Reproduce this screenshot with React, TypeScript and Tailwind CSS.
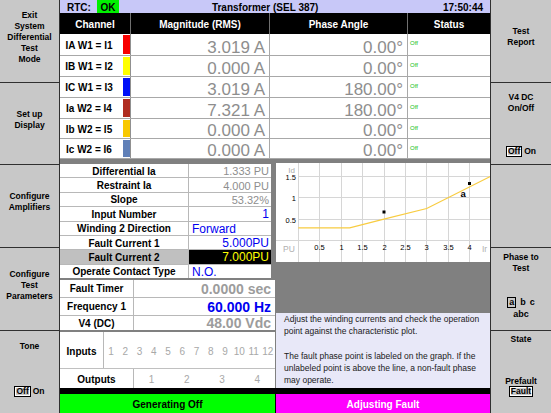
import React from "react";

const channels = [
  { ch: "IA W1 = I1", strip: "bg-[#f80000]", mag: "3.019 A", ang: "0.00", h: "h-[22px]" },
  { ch: "IB W1 = I2", strip: "bg-[#ffff00]", mag: "0.000 A", ang: "0.00", h: "h-[21px]" },
  { ch: "IC W1 = I3", strip: "bg-[#0010f8]", mag: "3.019 A", ang: "180.00", h: "h-[21px]" },
  { ch: "Ia W2 = I4", strip: "bg-[#b02c20]", mag: "7.321 A", ang: "180.00", h: "h-[21px]" },
  { ch: "Ib W2 = I5", strip: "bg-[#f8c800]", mag: "0.000 A", ang: "0.00", h: "h-[20px]" },
  { ch: "Ic W2 = I6", strip: "bg-[#6080b8]", mag: "0.000 A", ang: "0.00", h: "h-[20px]" },
];

const params = [
  { l: "Differential Ia", v: "1.333 PU", vc: "justify-end pr-[2px] text-[11px] text-[#8e8e8e]" },
  { l: "Restraint Ia", v: "4.000 PU", vc: "justify-end pr-[2px] text-[11px] text-[#8e8e8e]" },
  { l: "Slope", v: "53.32%", vc: "justify-end pr-[2px] text-[11px] text-[#8e8e8e]" },
  { l: "Input Number", v: "1", vc: "justify-end pr-[2px] text-[12px] text-[#0000f0]" },
  { l: "Winding 2 Direction", v: "Forward", vc: "justify-start pl-[3px] text-[12px] text-[#0000f0]" },
  { l: "Fault Current 1", v: "5.000PU", vc: "justify-end pr-[2px] text-[12px] text-[#0000f0]" },
  { l: "Fault Current 2", v: "7.000PU", vc: "justify-end pr-[2px] text-[12px] text-[#ffff00] bg-black", sel: true },
  { l: "Operate Contact Type", v: "N.O.", vc: "justify-start pl-[3px] text-[12px] text-[#0000f0]" },
];

// boxed "Off" + plain "On"
const Toggle = () => (
  <div className="flex items-center justify-center gap-[2px] text-[8.5px] font-bold leading-[9px]">
    <span className="border border-black px-px shadow-[inset_0_0_0_1px_#ffffff]">Off</span>
    <span>On</span>
  </div>
);

const LeftBar = () => (
  <div className="w-[60px] shrink-0 flex flex-col border-r border-[#303030] bg-[#c8c8c8] text-[8.5px] font-bold leading-[11px] text-center">
    <div className="h-[83px] border-b border-[#303030] flex items-center justify-center pb-[8px]">
      Exit<br />System<br />Differential<br />Test<br />Mode
    </div>
    <div className="h-[82px] border-b border-[#303030] flex items-center justify-center pb-[8px]">
      Set up<br />Display
    </div>
    <div className="h-[83px] border-b border-[#303030] flex items-center justify-center pb-[8px]">
      Configure<br />Amplifiers
    </div>
    <div className="h-[83px] border-b border-[#303030] flex items-center justify-center pb-[8px]">
      Configure<br />Test<br />Parameters
    </div>
    <div className="h-[82px] flex flex-col items-center pt-[10px] pb-[16px]">
      <div>Tone</div>
      <div className="mt-auto"><Toggle /></div>
    </div>
  </div>
);

const RightBar = () => (
  <div className="w-[61px] shrink-0 flex flex-col border-l border-[#303030] bg-[#c8c8c8] text-[8.5px] font-bold leading-[11px] text-center">
    <div className="h-[83px] border-b border-[#303030] flex items-center justify-center pb-[8px]">
      Test<br />Report
    </div>
    <div className="h-[82px] border-b border-[#303030] flex flex-col items-center pt-[9px] pb-[7px]">
      <div>V4 DC<br />On/Off</div>
      <div className="mt-auto"><Toggle /></div>
    </div>
    <div className="h-[83px] border-b border-[#303030]" />
    <div className="h-[83px] border-b border-[#303030] flex flex-col items-center pt-[4px] pb-[10px]">
      <div>Phase to<br />Test</div>
      <div className="mt-auto flex flex-col items-center text-[9px]">
        <div className="flex items-center gap-[4px] leading-[9px]">
          <span className="border border-black px-px">a</span>
          <span>b</span>
          <span>c</span>
        </div>
        <div className="leading-[12px]">abc</div>
      </div>
    </div>
    <div className="h-[82px] flex flex-col items-center pt-[3px] pb-[16px]">
      <div>State</div>
      <div className="mt-auto flex flex-col items-center">
        <div className="leading-[10px]">Prefault</div>
        <span className="border border-black px-px leading-[9px] shadow-[inset_0_0_0_1px_#ffffff]">Fault</span>
      </div>
    </div>
  </div>
);

const vx = [22.5, 43.5, 65.5, 86.5, 108.5, 129.5, 150.5, 172.5, 193.5];
const xl = ["0.5", "1", "1.5", "2", "2.5", "3", "3.5", "4"];

const Chart = () => (
  <svg width="214" height="99" className="block">
    <rect width="214" height="99" fill="#ffffff" />
    {vx.map((x) => (
      <line key={x} x1={x} y1={0} x2={x} y2={99} stroke="#d6d6d6" />
    ))}
    {[13.5, 34.5, 56.5].map((y) => (
      <line key={y} x1={22} y1={y} x2={214} y2={y} stroke="#d6d6d6" />
    ))}
    <line x1={0} y1={77.5} x2={214} y2={77.5} stroke="#d6d6d6" />
    <polyline
      points="22.3,64.8 73.7,64.8 107.9,56.2 150.7,45.5 214.9,13.2"
      fill="none"
      stroke="#f8cc40"
      strokeWidth="1.2"
    />
    <rect x="106.5" y="47.5" width="3" height="3" fill="#000" />
    <rect x="192" y="19" width="3" height="3" fill="#000" />
    <text x="184.5" y="34" fontSize="9.5" fontWeight="bold" fill="#000">a</text>
    <text x="19" y="9.5" fontSize="8" textAnchor="end" fill="#a8a8a8">Id</text>
    <text x="20" y="17" fontSize="7.5" textAnchor="end" fill="#000">1.5</text>
    <text x="20" y="38" fontSize="7.5" textAnchor="end" fill="#000">1</text>
    <text x="20" y="59.5" fontSize="7.5" textAnchor="end" fill="#000">0.5</text>
    <text x="7" y="89" fontSize="8.5" fill="#b0b0b0">PU</text>
    {xl.map((t, i) => (
      <text key={t} x={vx[i + 1]} y="87" fontSize="7.5" textAnchor="middle" fill="#000">{t}</text>
    ))}
    <text x="206" y="89" fontSize="8.5" fill="#b0b0b0">Ir</text>
  </svg>
);

const Center = () => (
  <div className="w-[430px] shrink-0 flex flex-col">
    {/* status line */}
    <div className="h-[13px] bg-[#c8c8f8] flex items-center text-[10px] font-bold leading-[10px]">
      <span className="ml-[7px] pt-[2px]">RTC:</span>
      <span className="ml-[6px] w-[22px] h-[13px] bg-[#00f000] flex items-center justify-center pt-[2px]">OK</span>
      <span className="ml-[93px] pt-[2px]">Transformer (SEL 387)</span>
      <span className="ml-auto mr-[7px] pt-[2px]">17:50:44</span>
    </div>

    {/* channel table */}
    <div className="h-[21px] bg-black flex text-white text-[10px] leading-[12px] font-bold">
      <div className="w-[71px] border-r border-[#707070] flex items-center justify-center pt-[3px]">Channel</div>
      <div className="w-[139px] border-r border-[#707070] flex items-center justify-center pt-[3px]">Magnitude (RMS)</div>
      <div className="w-[138px] border-r border-[#707070] flex items-center justify-center pt-[3px]">Phase Angle</div>
      <div className="flex-1 flex items-center justify-center pt-[3px]">Status</div>
    </div>
    <div className="h-[125px] flex flex-col bg-white">
      {channels.map((r) => (
        <div key={r.ch} className={`flex ${r.h} border-b border-[#a8a8a8]`}>
          <div className="w-[63px] flex items-center justify-center pr-[5px] pt-[2px] text-[10px] leading-[12px] font-bold">{r.ch}</div>
          <div className="w-[8px] border-r border-[#909090] py-px">
            <div className={`h-full ${r.strip}`} />
          </div>
          <div className="w-[139px] border-r border-[#a8a8a8] flex items-end justify-end pr-[4px] text-[17px] leading-[15px] text-[#8e8e8e]">
            {r.mag}
          </div>
          <div className="w-[138px] border-r border-[#a8a8a8] flex items-end justify-end pr-[4px] text-[17px] leading-[15px] text-[#8e8e8e]">
            {r.ang}°
          </div>
          <div className="flex-1 pl-[2px] pt-[6px] text-[6px] leading-[6px] text-[#10c010]">Off</div>
        </div>
      ))}
    </div>

    <div className="h-[4px]" />

    <div className="h-[225px] flex gap-[1px]">
      {/* left column */}
      <div className="w-[215px] flex flex-col">
        <div className="mt-[1px] w-[211px] h-[114px] bg-white flex flex-col">
          {params.map((p, i) => (
            <div key={p.l} className={`flex-1 min-h-0 flex ${i < params.length - 1 ? "border-b border-[#b8b8b8]" : ""}`}>
              <div className={`w-[129px] border-r border-[#b8b8b8] flex items-center justify-center pt-px text-[10px] leading-[11px] font-bold ${p.sel ? "bg-[#c0c0c0]" : ""}`}>
                {p.l}
              </div>
              <div className={`flex-1 flex items-center pt-px leading-[12px] ${p.vc}`}>{p.v}</div>
            </div>
          ))}
        </div>
        <div className="h-[2px]" />
        <div className="h-[50px] bg-white flex flex-col">
          <div className="h-[18px] flex border-b border-[#b8b8b8]">
            <div className="w-[74px] border-r border-[#b8b8b8] flex items-center justify-center text-[10px] leading-[11px] font-bold">Fault Timer</div>
            <div className="flex-1 flex items-center justify-end pr-[4px] pt-[2px] text-[14px] leading-[15px] font-bold text-[#9c9c9c]">0.0000 sec</div>
          </div>
          <div className="h-[18px] flex border-b border-[#b8b8b8]">
            <div className="w-[74px] border-r border-[#b8b8b8] flex items-center justify-center text-[10px] leading-[11px] font-bold">Frequency 1</div>
            <div className="flex-1 flex items-center justify-end pr-[4px] pt-[2px] text-[14px] leading-[15px] font-bold text-[#0000f0]">60.000 Hz</div>
          </div>
          <div className="h-[14px] flex">
            <div className="w-[74px] border-r border-[#b8b8b8] flex items-center justify-center text-[10px] leading-[11px] font-bold">V4 (DC)</div>
            <div className="flex-1 flex items-center justify-end pr-[4px] text-[14px] leading-[14px] font-bold text-[#9c9c9c]">48.00 Vdc</div>
          </div>
        </div>
        <div className="h-[2px]" />
        <div className="h-[56px] bg-white flex flex-col">
          <div className="h-[37px] flex border-b border-[#c0c0c0]">
            <div className="w-[44px] border-r border-[#b8b8b8] flex items-center justify-center pt-[3px] text-[10px] leading-[12px] font-bold">Inputs</div>
            <div className="flex-1 grid grid-cols-12 items-center pt-[3px] text-[10px] leading-[12px] text-[#a8a8a8]">
              {[1, 2, 3, 4, 5, 6, 7, 8, 9, 10, 11, 12].map((n) => (
                <div key={n} className="text-center">{n}</div>
              ))}
            </div>
          </div>
          <div className="flex-1 flex">
            <div className="w-[74px] border-r border-[#b8b8b8] flex items-center justify-center pt-[3px] text-[10px] leading-[12px] font-bold">Outputs</div>
            <div className="flex-1 grid grid-cols-4 items-center pt-[3px] text-[10px] leading-[12px] text-[#a8a8a8]">
              {[1, 2, 3, 4].map((n) => (
                <div key={n} className="text-center">{n}</div>
              ))}
            </div>
          </div>
        </div>
      </div>

      {/* right column */}
      <div className="w-[214px] flex flex-col">
        <Chart />
        <div className="flex-1" />
        <div className="h-[75px] bg-[#e8e8f8] pl-[8px] text-[8.5px] leading-[12.3px] text-[#202020] whitespace-nowrap">
          <div>Adjust the winding currents and check the operation</div>
          <div>point against the characteristic plot.</div>
          <div className="h-[12.3px]" />
          <div>The fault phase point is labeled on the graph. If the</div>
          <div>unlabeled point is above the line, a non-fault phase</div>
          <div>may operate.</div>
        </div>
      </div>
    </div>

    {/* generator state */}
    <div className="h-[25px] bg-black pt-[6px] flex gap-[1px] text-[10px] leading-[12px] font-bold">
      <div className="w-[215px] bg-[#00ff00] flex items-center justify-center pt-[3px]">Generating Off</div>
      <div className="flex-1 bg-[#ff00ff] text-white flex items-center justify-center pt-[3px]">Adjusting Fault</div>
    </div>
  </div>
);

export default function App() {
  return (
    <div className="w-[551px] h-[413px] flex overflow-hidden bg-[#808080] font-['Liberation_Sans',Arial,sans-serif] text-black">
      <LeftBar />
      <Center />
      <RightBar />
    </div>
  );
}
